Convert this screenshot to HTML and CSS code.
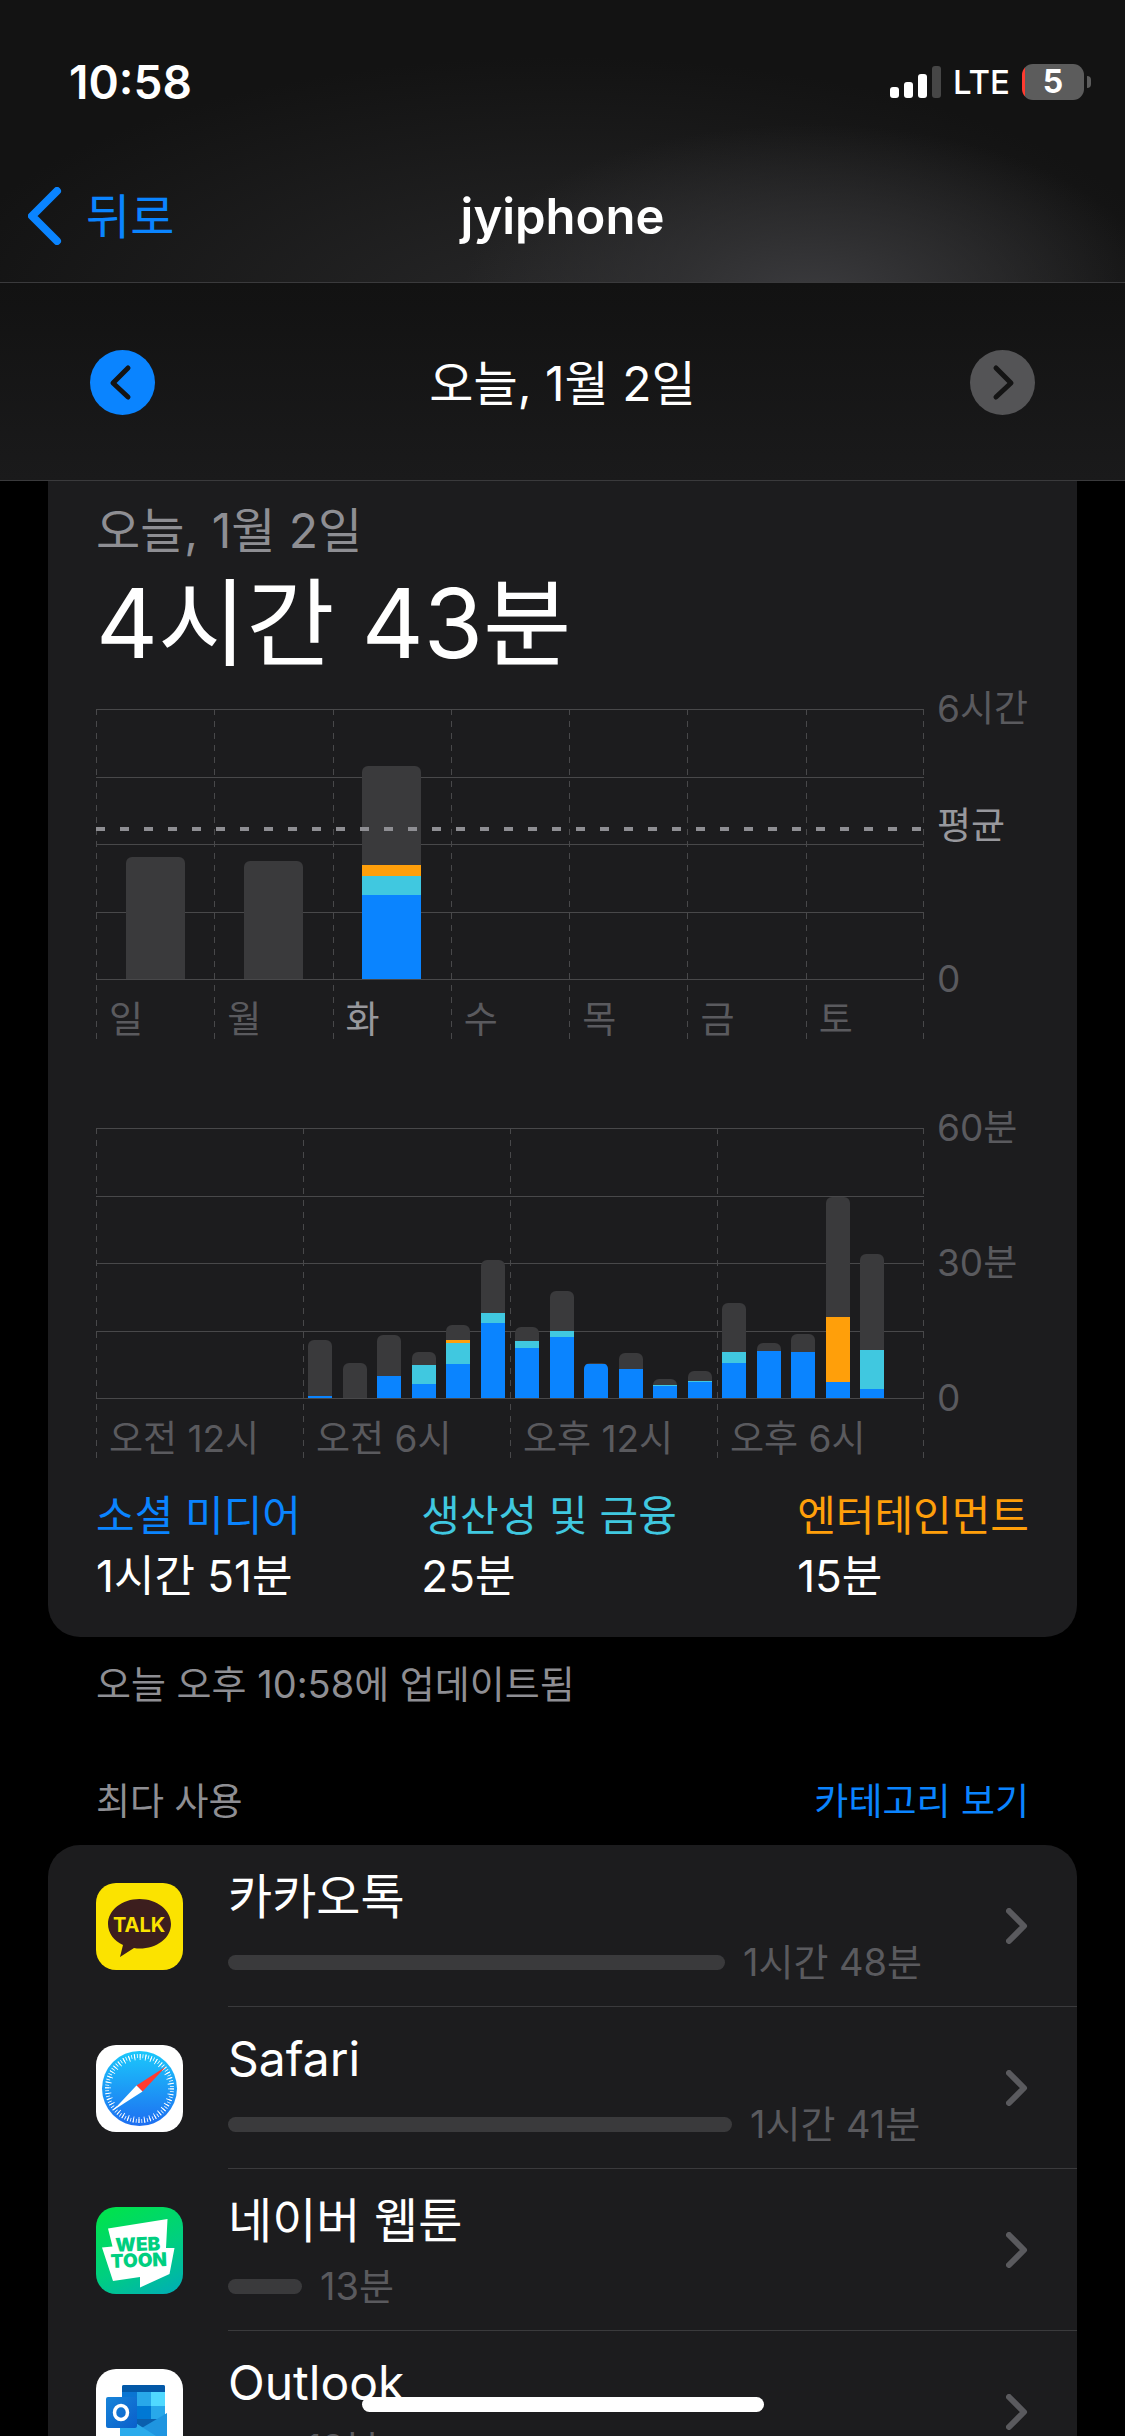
FILE: index.html
```html
<!DOCTYPE html>
<html lang="ko">
<head>
<meta charset="utf-8">
<meta name="viewport" content="width=device-width, initial-scale=1">
<title>jyiphone</title>
<link rel="stylesheet" href="styles.css">
</head>
<body>
<div class="screen">
  <header class="top">
    <div class="status">
      <span class="clock">10:58</span>
      <div class="status-icons">
        <svg class="signal" viewBox="0 0 51 32" aria-hidden="true">
          <rect x="0" y="21" width="9" height="11" rx="3"/><rect x="14" y="16" width="9" height="16" rx="3"/><rect x="28" y="8" width="9" height="24" rx="3"/><rect class="off" x="42" y="0" width="9" height="32" rx="3"/>
        </svg>
        <span class="network">LTE</span>
        <div class="battery"><span class="battery-body">5</span><span class="battery-tip"></span></div>
      </div>
    </div>
    <nav class="navbar">
      <a class="back" href="#">
        <svg class="back-icon" viewBox="0 0 34 58" aria-hidden="true"><path d="M29 4 4 29l25 25"/></svg>
        <span>뒤로</span>
      </a>
      <h1 class="title">jyiphone</h1>
    </nav>
  </header>

  <div class="datebar">
    <button class="step" type="button" aria-label="이전 날"><svg viewBox="0 0 65 65" aria-hidden="true"><path d="M38 18 23 33l15 14"/></svg></button>
    <span class="date">오늘, 1월 2일</span>
    <button class="step" type="button" aria-label="다음 날" disabled><svg viewBox="0 0 65 65" aria-hidden="true"><path d="M26 18l15 15-15 14"/></svg></button>
  </div>

  <main class="content">
    <section class="card summary">
      <p class="day">오늘, 1월 2일</p>
      <p class="total">4시간 43분</p>

      <div class="chart week">
        <div class="plot">
          <div class="lines"><i></i><i></i><i></i><i></i><i></i></div>
          <div class="ticks"><span>일</span><span>월</span><span class="now">화</span><span>수</span><span>목</span><span>금</span><span>토</span></div>
          <div class="bars">
            <div class="bar" style="height:122px"></div>
            <div class="bar" style="height:118px"></div>
            <div class="bar" style="height:213px"><i class="fun" style="height:11px"></i><i class="work" style="height:19px"></i><i class="social" style="height:84px"></i></div>
          </div>
          <div class="average" style="bottom:55%"></div>
        </div>
        <div class="axis"><span>6시간</span><span class="average-label" style="bottom:48%">평균</span><span>0</span></div>
      </div>

      <div class="chart day-chart">
        <div class="plot">
          <div class="lines"><i></i><i></i><i></i><i></i><i></i></div>
          <div class="ticks"><span>오전 12시</span><span>오전 6시</span><span>오후 12시</span><span>오후 6시</span></div>
          <div class="bars">
            <b></b><b></b><b></b><b></b><b></b><b></b>
            <div class="bar" style="height:58px"><i class="social" style="height:2px"></i></div>
            <div class="bar" style="height:35px"></div>
            <div class="bar" style="height:63px"><i class="social" style="height:22px"></i></div>
            <div class="bar" style="height:46px"><i class="work" style="height:19px"></i><i class="social" style="height:14px"></i></div>
            <div class="bar" style="height:73px"><i class="fun" style="height:3px"></i><i class="work" style="height:21px"></i><i class="social" style="height:34px"></i></div>
            <div class="bar" style="height:138px"><i class="work" style="height:10px"></i><i class="social" style="height:75px"></i></div>
            <div class="bar" style="height:71px"><i class="work" style="height:7px"></i><i class="social" style="height:50px"></i></div>
            <div class="bar" style="height:107px"><i class="work" style="height:6px"></i><i class="social" style="height:61px"></i></div>
            <div class="bar" style="height:35px"><i class="social" style="height:34px"></i></div>
            <div class="bar" style="height:45px"><i class="social" style="height:29px"></i></div>
            <div class="bar" style="height:19px"><i class="work" style="height:1px"></i><i class="social" style="height:12px"></i></div>
            <div class="bar" style="height:27px"><i class="work" style="height:1px"></i><i class="social" style="height:16px"></i></div>
            <div class="bar" style="height:95px"><i class="work" style="height:11px"></i><i class="social" style="height:35px"></i></div>
            <div class="bar" style="height:55px"><i class="social" style="height:47px"></i></div>
            <div class="bar" style="height:64px"><i class="social" style="height:46px"></i></div>
            <div class="bar" style="height:201px"><i class="fun" style="height:65px"></i><i class="social" style="height:16px"></i></div>
            <div class="bar" style="height:144px"><i class="work" style="height:39px"></i><i class="social" style="height:9px"></i></div>
          </div>
        </div>
        <div class="axis"><span>60분</span><span>30분</span><span>0</span></div>
      </div>

      <dl class="legend">
        <div><dt class="social-text">소셜 미디어</dt><dd>1시간 51분</dd></div>
        <div><dt class="work-text">생산성 및 금융</dt><dd>25분</dd></div>
        <div><dt class="fun-text">엔터테인먼트</dt><dd>15분</dd></div>
      </dl>
    </section>
    <p class="updated">오늘 오후 10:58에 업데이트됨</p>

    <div class="section-head"><h2>최다 사용</h2><a href="#">카테고리 보기</a></div>
    <ul class="card apps">
      <li><a class="app" href="#">
        <svg class="app-icon" viewBox="0 0 87 87" aria-hidden="true">
          <rect width="87" height="87" rx="20" fill="#fbe300"/>
          <path d="M43.500 16C26 16 12 27 12 41c0 9 6 17 15 21l-3 12 14-9c2 .4 4 .5 5.500 .5C61 65.500 75 55 75 41S61 16 43.500 16z" fill="#3c1e1e"/>
          <text class="talk" x="43" y="49" text-anchor="middle">TALK</text>
        </svg>
        <span class="info"><span class="name">카카오톡</span><span class="usage"><span class="meter" style="width:497px"></span><span class="time">1시간 48분</span></span></span>
        <svg class="chevron" viewBox="0 0 22 36" aria-hidden="true"><path d="M3 3l15 15L3 33"/></svg>
      </a></li>
      <li><a class="app" href="#">
        <svg class="app-icon" viewBox="0 0 87 87" aria-hidden="true">
          <defs><linearGradient id="sky" x2="0" y2="1"><stop stop-color="#1bc8fb"/><stop offset="1" stop-color="#1e6ef1"/></linearGradient></defs>
          <rect width="87" height="87" rx="20" fill="#fff"/>
          <circle cx="43.500" cy="43.500" r="37.500" fill="url(#sky)"/>
          <circle cx="43.500" cy="43.500" r="32.500" fill="none" stroke="#fff" stroke-width="4" stroke-dasharray="0.800 2.036"/>
          <circle cx="43.500" cy="43.500" r="31.500" fill="none" stroke="#fff" stroke-width="6" stroke-dasharray="0.900 4.598"/>
          <path d="M70 21.500 40.500 40.500l6 6z" fill="#ff3b30"/><path d="M17 65.500 40.500 40.500l6 6z" fill="#fff"/>
        </svg>
        <span class="info"><span class="name">Safari</span><span class="usage"><span class="meter" style="width:504px"></span><span class="time">1시간 41분</span></span></span>
        <svg class="chevron" viewBox="0 0 22 36" aria-hidden="true"><path d="M3 3l15 15L3 33"/></svg>
      </a></li>
      <li><a class="app" href="#">
        <svg class="app-icon" viewBox="0 0 87 87" aria-hidden="true">
          <defs><linearGradient id="toon" x1="0.300" x2="0.800" y2="1"><stop stop-color="#00e150"/><stop offset="0.550" stop-color="#00cf80"/><stop offset="1" stop-color="#00b1b0"/></linearGradient></defs>
          <rect width="87" height="87" rx="20" fill="url(#toon)"/>
          <path d="M12 21.500 71.500 12l-1.500 29h8.500l-5 26L44 80.500V70l-27 4L6 40.500l10.500-1z" fill="#fff"/>
          <text class="toon" x="42" y="44" text-anchor="middle" transform="rotate(-2 43 43)">WEB</text>
          <text class="toon" x="43" y="60" text-anchor="middle" transform="rotate(-2 43 60)">TOON</text>
        </svg>
        <span class="info"><span class="name">네이버 웹툰</span><span class="usage"><span class="meter" style="width:74px"></span><span class="time">13분</span></span></span>
        <svg class="chevron" viewBox="0 0 22 36" aria-hidden="true"><path d="M3 3l15 15L3 33"/></svg>
      </a></li>
      <li><a class="app" href="#">
        <svg class="app-icon" viewBox="0 0 87 87" aria-hidden="true">
          <defs><linearGradient id="tile" x2="1" y2="1"><stop stop-color="#1784d9"/><stop offset="1" stop-color="#0a5fcb"/></linearGradient></defs>
          <rect width="87" height="87" rx="20" fill="#fff"/>
          <path d="M26 18q0-2 2-2h39q2 0 2 2v36H26z" fill="#0a75d2"/>
          <path d="M26 18q0-2 2-2h39q2 0 2 2v5H26z" fill="#0358a7"/>
          <path d="M41 23h14v14H41z" fill="#28a8ea"/><path d="M55 23h14v14H55z" fill="#50d9ff"/>
          <path d="M41 37h14v13H41z" fill="#0078d4"/><path d="M55 37h14v13H55z" fill="#28a8ea"/>
          <path d="M26 50h43l-22 12z" fill="#0a5fae"/>
          <path d="M71 44v30H44V60z" fill="#1f95e0"/><path d="M24 44l47 30H28q-4 0-4-4z" fill="#2aabec"/>
          <rect x="10" y="28" width="31" height="31" rx="2" fill="url(#tile)"/>
          <ellipse cx="25" cy="43.500" rx="6.500" ry="7" fill="none" stroke="#fff" stroke-width="3.500"/>
        </svg>
        <span class="info"><span class="name">Outlook</span><span class="usage"><span class="meter" style="width:60px"></span><span class="time">12분</span></span></span>
        <svg class="chevron" viewBox="0 0 22 36" aria-hidden="true"><path d="M3 3l15 15L3 33"/></svg>
      </a></li>
    </ul>
  </main>
  <div class="home"></div>
</div>
</body>
</html>
```
FILE: styles.css
```css
* { box-sizing: border-box; margin: 0; padding: 0; }
body { background: #000; color: #fff; font-family: Inter, "Noto Sans CJK KR", sans-serif; }
a { color: #0a84ff; text-decoration: none; }
ul { list-style: none; }
svg { display: block; flex: none; }
.screen { position: relative; display: flex; flex-direction: column; height: 100vh; overflow: hidden; }

.top {
  flex: none;
  border-bottom: 1px solid #3a3a3c;
  background:
    radial-gradient(ellipse 31% 62% at 72% 106%, #3b3b3e 0%, rgba(52, 52, 54, 0.75) 40%, rgba(30, 30, 31, 0) 100%),
    radial-gradient(ellipse 56% 90% at 50% 110%, #272728 0%, rgba(20, 20, 20, 0) 100%),
    #131313;
}
.status { display: flex; justify-content: space-between; align-items: center; height: 150px; padding: 14px 34px 0 69px; }
.clock { font-size: 46px; font-weight: 600; }
.status-icons { display: flex; align-items: center; gap: 12px; }
.signal { width: 51px; height: 32px; fill: #fff; }
.signal .off { fill: #464646; }
.network { font-size: 33px; font-weight: 500; line-height: 40px; }
.battery { display: flex; align-items: center; gap: 3px; }
.battery-body { width: 62px; height: 36px; border-radius: 11px; background: linear-gradient(90deg, #ff3b30 3px, #5c5c5c 3px); font-size: 32px; font-weight: 700; line-height: 36px; text-align: center; }
.battery-tip { width: 4px; height: 12px; border-radius: 0 6px 6px 0; background: #5c5c5c; }
.navbar { display: grid; grid-template-columns: 1fr auto 1fr; align-items: center; height: 132px; padding: 0 28px; }
.back { display: flex; align-items: center; gap: 24px; font-size: 48px; }
.back span { padding-bottom: 6px; }
.back-icon { width: 34px; height: 58px; fill: none; stroke: #0a84ff; stroke-width: 8; stroke-linecap: round; stroke-linejoin: round; }
.title { font-size: 49px; font-weight: 600; }

.datebar { flex: none; display: flex; justify-content: space-between; align-items: center; height: 198px; padding: 2px 90px 0; border-bottom: 1px solid #3a3a3c; background: linear-gradient(#121212, #1a1a1b); }
.date { padding-bottom: 6px; font-size: 48px; }
.step { width: 65px; height: 65px; border: 0; border-radius: 50%; background: #0a84ff; }
.step:disabled { background: #545456; }
.step svg { width: 65px; height: 65px; fill: none; stroke: #141414; stroke-width: 5; stroke-linecap: round; stroke-linejoin: round; }

.content { flex: 1; min-height: 0; overflow: hidden; padding: 0 48px; }
.card { background: #1c1c1e; border-radius: 32px; }
.summary { padding: 20px 48px 31px; border-radius: 0 0 32px 32px; }
.day { color: #8e8e93; font-size: 48px; line-height: 60px; }
.total { font-size: 96px; line-height: 124px; }

.chart { display: grid; grid-template-columns: 1fr 105px; }
.week { margin-top: 24px; }
.day-chart { margin-top: 89px; }
.plot { display: grid; position: relative; grid-template-rows: 270px 60px; }
.plot > * { grid-area: 1 / 1 / 2 / 2; }
.plot > .ticks { grid-row: 1 / 3; }
.lines { display: flex; flex-direction: column; justify-content: space-between; height: 271px; }
.lines i { height: 1px; background: #48484a; }
.ticks { display: grid; grid-auto-flow: column; grid-auto-columns: 1fr; background: repeating-linear-gradient(#48484a 0 6px, transparent 6px 12px) right / 1px 100% no-repeat; }
.ticks span { display: flex; align-items: flex-end; padding-left: 13px; color: #5a5a5e; font-size: 37px; line-height: 38px; white-space: nowrap; background: repeating-linear-gradient(#48484a 0 6px, transparent 6px 12px) left / 1px 100% no-repeat; }
.ticks .now { color: #98989d; }
.bars { display: grid; align-items: end; justify-items: center; }
.week .bars { grid-template-columns: repeat(7, 1fr); }
.day-chart .bars { grid-template-columns: repeat(24, 1fr); }
.bar { display: flex; flex-direction: column; justify-content: flex-end; width: 59px; border-radius: 6px 6px 0 0; background: #3a3a3c; overflow: hidden; }
.day-chart .bar { width: 24px; }
.bar i { flex: none; }
.social { background: #0a84ff; }
.work { background: #40c8e0; }
.fun { background: #ff9f0a; }
.average { position: absolute; left: 0; right: 0; height: 4px; background: repeating-linear-gradient(90deg, #8e8e93 0 9px, transparent 9px 24px); }
.axis { position: relative; display: flex; flex-direction: column; justify-content: space-between; height: 318px; margin-top: -24px; padding-left: 13px; color: #5a5a5e; font-size: 37px; line-height: 48px; white-space: nowrap; }
.axis .average-label { position: absolute; color: #98989d; }

.legend { display: flex; justify-content: space-between; margin-top: 28px; font-size: 42px; line-height: 60px; }
.legend dd { font-size: 44px; }
.social-text { color: #0a84ff; }
.work-text { color: #40c8e0; }
.fun-text { color: #ff9f0a; }

.updated { padding: 22px 48px 0; color: #8e8e93; font-size: 38px; line-height: 50px; }
.section-head { display: flex; justify-content: space-between; padding: 68px 48px 18px; font-size: 37px; line-height: 50px; }
.section-head h2 { color: #8e8e93; font-size: 37px; font-weight: 400; }
.app { display: flex; align-items: center; height: 162px; padding-left: 48px; color: #fff; }
.app-icon { width: 87px; height: 87px; margin-right: 45px; }
.info { flex: 1; align-self: stretch; padding-top: 22px; }
.apps li { background: linear-gradient(#3a3a3c, #3a3a3c) 180px 100% / 100% 1px no-repeat; }
.name { display: block; font-size: 48px; line-height: 60px; }
.usage { display: flex; align-items: center; gap: 18px; margin-top: 10px; }
.meter { height: 15px; border-radius: 8px; background: #3a3a3c; }
.time { color: #5a5a5e; font-size: 38px; line-height: 50px; white-space: nowrap; }
.chevron { width: 22px; height: 36px; margin-right: 49px; fill: none; stroke: #5a5a5e; stroke-width: 6; stroke-linecap: round; stroke-linejoin: round; }
.talk { fill: #fbe300; font: 700 20px Inter, sans-serif; }
.toon { fill: #00cf80; font: 900 19px Inter, sans-serif; }

.home { position: absolute; left: 50%; bottom: 24px; width: 402px; height: 15px; margin-left: -201px; border-radius: 8px; background: #fff; }
```
